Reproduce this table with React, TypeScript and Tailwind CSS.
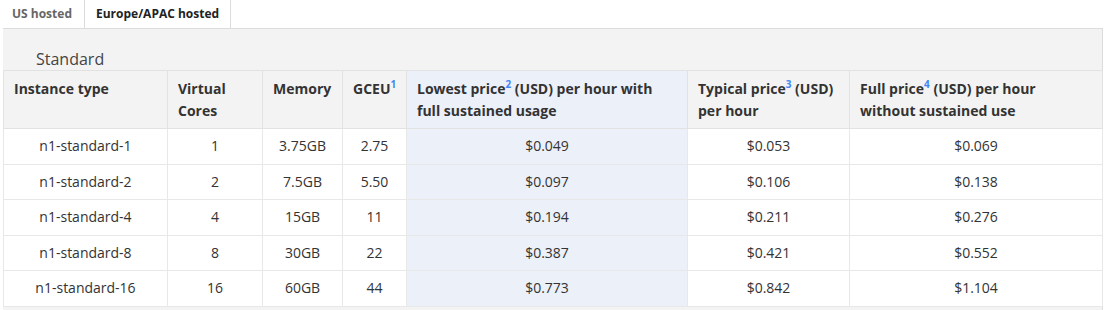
const rows = [
  ["n1-standard-1", "1", "3.75GB", "2.75", "$0.049", "$0.053", "$0.069"],
  ["n1-standard-2", "2", "7.5GB", "5.50", "$0.097", "$0.106", "$0.138"],
  ["n1-standard-4", "4", "15GB", "11", "$0.194", "$0.211", "$0.276"],
  ["n1-standard-8", "8", "30GB", "22", "$0.387", "$0.421", "$0.552"],
  ["n1-standard-16", "16", "60GB", "44", "$0.773", "$0.842", "$1.104"],
];

function Sup({ n }: { n: string }) {
  return <sup className="relative -top-[0.6em] text-[10px] font-bold text-[#4285f4]">{n}</sup>;
}

export default function App() {
  const th = "border border-[#e2e2e2] bg-[#f3f3f3] px-[10px] pt-[7px] pb-[6px] text-left align-top font-bold leading-[22px]";
  const td = "border border-[#e8e8e8] px-[10px] py-[7px] text-center leading-[20.5px]";
  return (
    <div className="h-[310px] w-[1107px] overflow-hidden bg-white text-[14px] text-[#333]" style={{ fontFamily: '"Open Sans", sans-serif' }}>
      <div className="flex h-[28px] text-[12px] font-bold">
        <div className="flex items-center px-[12px] text-[#666]">US hosted</div>
        <div className="flex items-center border-x border-[#dcdcdc] bg-white px-[11px] text-[#222]">Europe/APAC hosted</div>
      </div>
      <div className="ml-[3px] w-[1100px] border-t border-r border-[#dcdcdc] bg-[#f3f3f3] pb-[20px]">
        <div className="pl-[33px] pt-[19px] text-[16px] leading-[22px] text-[#444]">Standard</div>
        <table className="w-[1099px] table-fixed border-collapse bg-white">
          <colgroup>
            <col className="w-[164px]" />
            <col className="w-[95px]" />
            <col className="w-[80px]" />
            <col className="w-[64px]" />
            <col className="w-[281px]" />
            <col className="w-[162px]" />
            <col className="w-[253px]" />
          </colgroup>
          <thead>
            <tr>
              <th className={th}>Instance type</th>
              <th className={th}>Virtual Cores</th>
              <th className={th}>Memory</th>
              <th className={th}>GCEU<Sup n="1" /></th>
              <th className={`${th} !bg-[#ecf0f9]`}>Lowest price<Sup n="2" /> (USD) per hour with full sustained usage</th>
              <th className={th}>Typical price<Sup n="3" /> (USD) per hour</th>
              <th className={th}>Full price<Sup n="4" /> (USD) per hour without sustained use</th>
            </tr>
          </thead>
          <tbody>
            {rows.map((r) => (
              <tr key={r[0]}>
                {r.map((c, i) => (
                  <td key={i} className={`${td} ${i === 4 ? "bg-[#ecf0f9]" : ""}`}>{c}</td>
                ))}
              </tr>
            ))}
          </tbody>
        </table>
      </div>
    </div>
  );
}
